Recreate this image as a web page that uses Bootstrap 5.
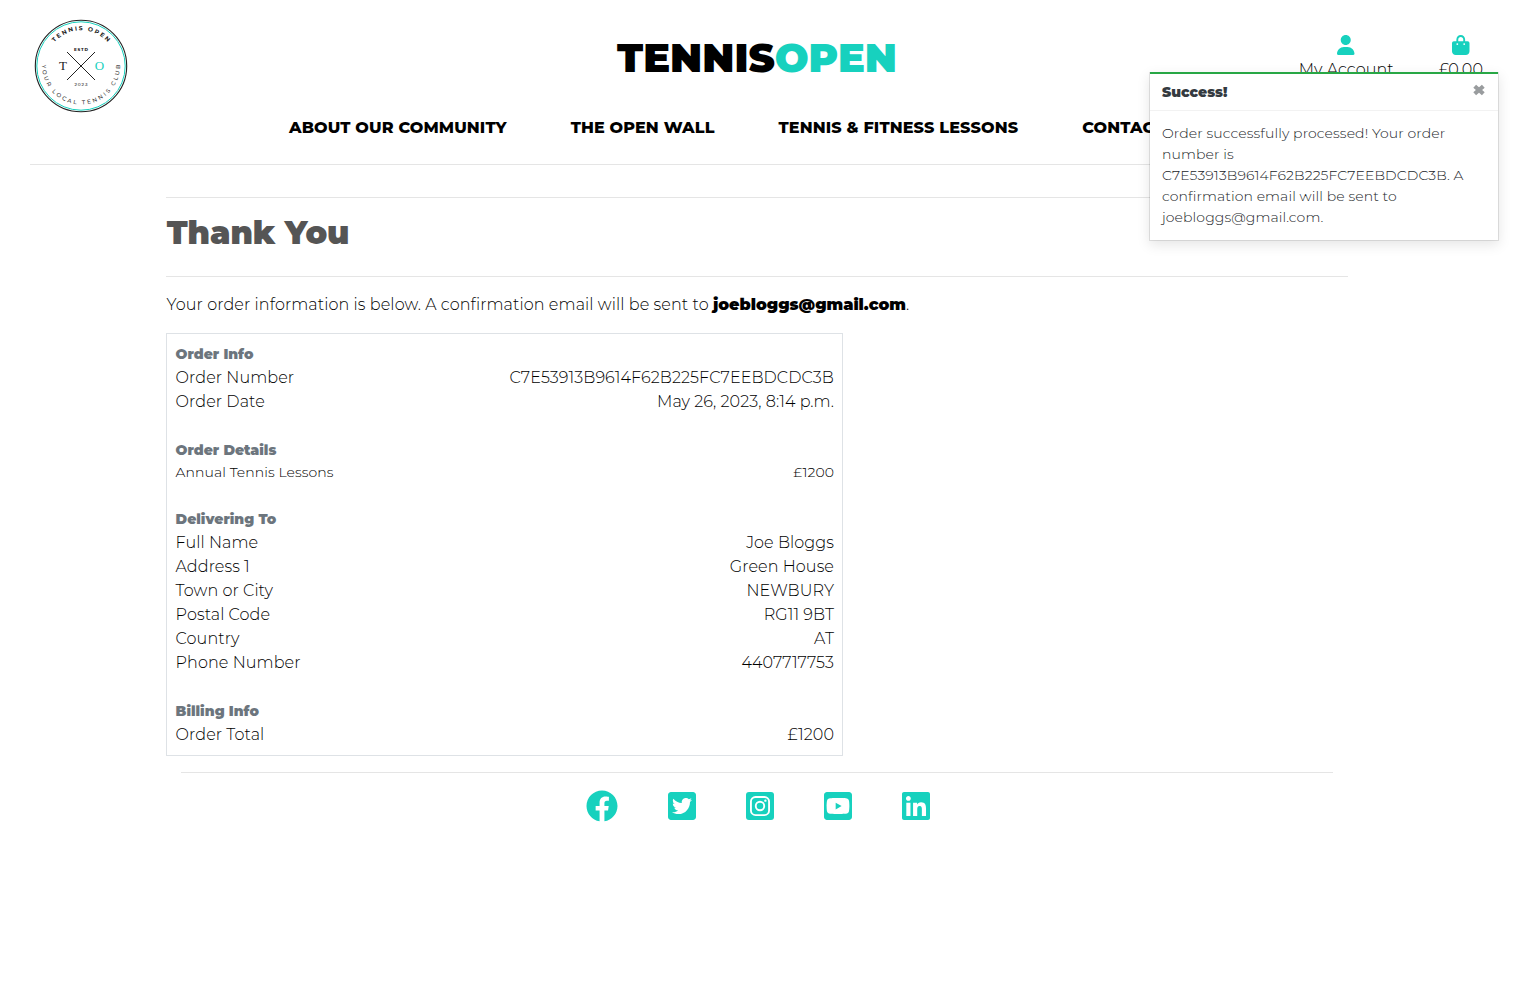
<!DOCTYPE html>
<html lang="en">
<head>
<meta charset="utf-8">
<meta name="viewport" content="width=device-width, initial-scale=1">
<title>Tennis Open</title>
<link href="https://cdn.jsdelivr.net/npm/bootstrap@5.3.0/dist/css/bootstrap.min.css" rel="stylesheet">
<style>
body{font-family:Montserrat,Inter,sans-serif;font-weight:300;color:#000;background:#fff;font-size:16px;line-height:24px;letter-spacing:.08px;overflow-x:hidden}
svg{display:block}
.teal{color:#17d1be}
.site-head{height:164px;padding:0 30px}
.head-top{height:112px}
.brand-logo{width:94px;height:94px;margin:19px 0 0 4px}
.site-title{font-size:40px;font-weight:900;line-height:48px;padding-top:34px;letter-spacing:0}
.side{flex:1 1 0}
.acct{padding-top:35px}
.acct a{color:#000;text-decoration:none;text-align:center;line-height:24px}
.acct svg{width:17.5px;height:20px;margin:0 auto 3px}
.acct .bag{margin-left:45px;margin-right:1px}
.site-nav{gap:64px;padding-left:259px;margin-top:4px}
.site-nav a{color:#000;text-decoration:none;font-weight:800;white-space:nowrap;letter-spacing:.12px}
.line{border-top:1px solid #e5e5e5}
.main-col{width:1182px;margin:32px auto 0}
h1{font-size:32px;font-weight:900;line-height:38.4px;color:#555;margin:16px 0 24px;padding-left:.7px;letter-spacing:-.05px}
.intro{margin:16px 0 16px;padding-left:.6px;letter-spacing:.1px}
.intro b{letter-spacing:0}
.intro b,.grp{font-weight:900}
.order-box{width:677px;border:1px solid #dee2e6;padding:8px 8px 8px 8.6px}
.grp{font-size:14px;color:#6c757d;letter-spacing:0}
.sect{margin-bottom:24px}
.sect:last-child{margin-bottom:0}
.s14{font-size:14px;line-height:21px}
.s14 span{position:relative;top:-.5px}
.foot-line{margin:16px 15px 0}
.social{gap:50px;padding:17px 0 0 2px}
.social svg{height:32px}
.toast-pane{position:absolute;top:72px;right:15px;width:350px;background:#fff;border:1px solid rgba(0,0,0,.1);border-top:0;background-clip:padding-box;box-shadow:0 4px 12px rgba(0,0,0,.1);font-size:14px;line-height:21px}
.toast-bar{height:2px;background:#28a745}
.toast-top{height:37px;padding:0 12.500px 0 12px;border-bottom:1px solid rgba(0,0,0,.05)}
.toast-top strong{font-weight:900;color:#343a40;letter-spacing:0}
.toast-text{padding:12px;color:#212529;letter-spacing:.1px}
</style>
</head>
<body>
<header class="site-head">
  <div class="head-top d-flex">
    <div class="side">
      <svg class="brand-logo" viewBox="-47 -47 94 94">
        <defs>
          <path id="arcTop" d="M-35.7 0A35.7 35.7 0 0 1 35.7 0"/>
          <path id="arcBottom" d="M-38.6 -6A39 39 0 1 0 38.6 -6"/>
        </defs>
        <circle r="45.7" fill="none" stroke="#222" stroke-width="1.1"/>
        <circle r="44.2" fill="none" stroke="#17d1be" stroke-width="1"/>
        <text font-size="6" font-weight="700" fill="#222"><textPath href="#arcTop" startOffset="50%" text-anchor="middle" textLength="60">TENNIS OPEN</textPath></text>
        <text font-size="5.700" font-weight="500" fill="#333"><textPath href="#arcBottom" startOffset="50%" text-anchor="middle" textLength="124">YOUR LOCAL TENNIS CLUB</textPath></text>
        <path d="M-14-14L14 14M14-14L-14 14" stroke="#222" stroke-width="1"/>
        <g text-anchor="middle" fill="#222">
          <text y="-14.9" font-size="4.2" font-weight="800" textLength="14">ESTD</text>
          <text y="20" font-size="4.4" font-weight="500" textLength="13">2023</text>
          <text x="-18" y="4" font-family="Liberation Serif,serif" font-size="13" font-weight="400">T</text>
          <text x="18.5" y="4" font-family="Liberation Serif,serif" font-size="13" font-weight="400" fill="#17d1be">O</text>
        </g>
      </svg>
    </div>
    <div class="site-title">TENNIS<span class="teal">OPEN</span></div>
    <div class="side acct d-flex justify-content-end">
      <a href="#"><svg class="teal" viewBox="0 0 448 512" fill="currentColor"><path d="M224 256c70.7 0 128-57.3 128-128S294.7 0 224 0 96 57.3 96 128s57.3 128 128 128zm-45.7 48C79.8 304 0 383.8 0 482.3C0 498.7 13.3 512 29.7 512H418.3c16.4 0 29.7-13.3 29.7-29.7C448 383.8 368.2 304 269.7 304H178.3z"/></svg>My Account</a>
      <a href="#" class="bag"><svg class="teal" viewBox="0 0 448 512" fill="currentColor"><path d="M160 112c0-35.3 28.7-64 64-64s64 28.7 64 64v48H160V112zm-48 48H48c-26.5 0-48 21.5-48 48V416c0 53 43 96 96 96H352c53 0 96-43 96-96V208c0-26.5-21.5-48-48-48H336V112C336 50.1 285.9 0 224 0S112 50.1 112 112v48zm24 48a24 24 0 1 1 0 48 24 24 0 1 1 0-48zm152 24a24 24 0 1 1 48 0 24 24 0 1 1-48 0z"/></svg>£0.00</a>
    </div>
  </div>
  <nav class="site-nav d-flex">
    <a href="#">ABOUT OUR COMMUNITY</a><a href="#">THE OPEN WALL</a><a href="#">TENNIS &amp; FITNESS LESSONS</a><a href="#">CONTACT US</a>
  </nav>
</header>
<div class="line" style="margin:0 30px"></div>

<main class="main-col">
  <div class="line"></div>
  <h1>Thank You</h1>
  <div class="line"></div>
  <p class="intro">Your order information is below. A confirmation email will be sent to <b>joebloggs@gmail.com</b>.</p>
  <div class="order-box">
    <section class="sect">
      <div class="grp">Order Info</div>
      <div class="d-flex justify-content-between"><span>Order Number</span><span>C7E53913B9614F62B225FC7EEBDCDC3B</span></div>
      <div class="d-flex justify-content-between"><span>Order Date</span><span>May 26, 2023, 8:14 p.m.</span></div>
    </section>
    <section class="sect">
      <div class="grp">Order Details</div>
      <div class="d-flex justify-content-between s14"><span>Annual Tennis Lessons</span><span>£1200</span></div>
    </section>
    <section class="sect">
      <div class="grp">Delivering To</div>
      <div class="d-flex justify-content-between"><span>Full Name</span><span>Joe Bloggs</span></div>
      <div class="d-flex justify-content-between"><span>Address 1</span><span>Green House</span></div>
      <div class="d-flex justify-content-between"><span>Town or City</span><span>NEWBURY</span></div>
      <div class="d-flex justify-content-between"><span>Postal Code</span><span>RG11 9BT</span></div>
      <div class="d-flex justify-content-between"><span>Country</span><span>AT</span></div>
      <div class="d-flex justify-content-between"><span>Phone Number</span><span>4407717753</span></div>
    </section>
    <section class="sect">
      <div class="grp">Billing Info</div>
      <div class="d-flex justify-content-between"><span>Order Total</span><span>£1200</span></div>
    </section>
  </div>
  <footer>
    <div class="line foot-line"></div>
    <div class="social teal d-flex justify-content-center">
      <svg viewBox="0 0 512 512" width="32" fill="currentColor"><path d="M504 256C504 119 393 8 256 8S8 119 8 256c0 123.78 90.69 226.38 209.25 245V327.69h-63V256h63v-54.64c0-62.15 37-96.48 93.67-96.48 27.14 0 55.52 4.84 55.52 4.84v61h-31.28c-30.8 0-40.41 19.12-40.41 38.73V256h68.78l-11 71.69h-57.78V501C413.31 482.38 504 379.78 504 256z"/></svg>
      <svg viewBox="0 0 448 512" width="28" fill="currentColor"><path d="M400 32H48C21.5 32 0 53.5 0 80v352c0 26.5 21.5 48 48 48h352c26.5 0 48-21.5 48-48V80c0-26.5-21.5-48-48-48zm-48.9 158.8c.2 2.8.2 5.7.2 8.5 0 86.7-66 186.6-186.6 186.6-37.2 0-71.7-10.8-100.7-29.4 5.3.6 10.4.8 15.8.8 30.7 0 58.9-10.4 81.4-28-28.8-.6-53-19.5-61.3-45.5 10.1 1.5 19.2 1.5 29.6-1.2-30-6.1-52.5-32.5-52.5-64.4v-.8c8.7 4.9 18.9 7.9 29.6 8.3a65.447 65.447 0 0 1-29.2-54.6c0-12.2 3.2-23.4 8.9-33.1 32.3 39.8 80.8 65.8 135.2 68.6-9.3-44.5 24-80.6 64-80.6 18.9 0 35.9 7.9 47.9 20.7 14.8-2.8 29-8.3 41.6-15.8-4.9 15.2-15.2 28-28.8 36.1 13.2-1.4 26-5.1 37.8-10.2-8.9 13.1-20.1 24.7-32.9 34z"/></svg>
      <svg viewBox="0 0 448 512" width="28"><rect y="32" width="448" height="448" rx="48" fill="currentColor"/><g fill="none" stroke="#fff" stroke-width="30"><rect x="79" y="111" width="290" height="290" rx="74"/><circle cx="224" cy="256" r="68"/></g><circle cx="310" cy="170" r="19" fill="#fff"/></svg>
      <svg viewBox="0 0 448 512" width="28" fill="currentColor"><path d="M186.8 202.1l95.2 54.1-95.2 54.1V202.1zM448 80v352c0 26.5-21.5 48-48 48H48c-26.5 0-48-21.5-48-48V80c0-26.5 21.5-48 48-48h352c26.5 0 48 21.5 48 48zm-42 176.3s0-59.6-7.6-88.2c-4.2-15.8-16.5-28.2-32.2-32.4C337.9 128 224 128 224 128s-113.9 0-142.2 7.7c-15.7 4.2-28 16.6-32.2 32.4-7.6 28.5-7.6 88.2-7.6 88.2s0 59.6 7.6 88.2c4.2 15.8 16.5 27.7 32.2 31.9C110.1 384 224 384 224 384s113.9 0 142.2-7.7c15.7-4.2 28-16.1 32.2-31.9 7.6-28.5 7.6-88.1 7.6-88.1z"/></svg>
      <svg viewBox="0 0 448 512" width="28" fill="currentColor"><path d="M416 32H31.9C14.3 32 0 46.5 0 64.3v383.4C0 465.5 14.3 480 31.9 480H416c17.6 0 32-14.5 32-32.3V64.3c0-17.8-14.4-32.3-32-32.3zM135.4 416H69V202.2h66.5V416zm-33.2-243c-21.3 0-38.5-17.3-38.5-38.5S80.9 96 102.2 96c21.2 0 38.5 17.3 38.5 38.5 0 21.3-17.2 38.5-38.5 38.5zm282.1 243h-66.4V312c0-24.8-.5-56.7-34.5-56.7-34.6 0-39.9 27-39.9 54.9V416h-66.4V202.2h63.7v29.2h.9c8.9-16.8 30.6-34.5 62.9-34.5 67.2 0 79.7 44.3 79.7 101.9V416z"/></svg>
    </div>
  </footer>
</main>

<div class="toast-pane" role="alert">
  <div class="toast-bar"></div>
  <div class="toast-top d-flex justify-content-between align-items-center">
    <strong>Success!</strong>
    <svg width="14" height="14" viewBox="-7 -7 14 14" style="margin-top:-5px"><path d="M-4.3-3.8L4.3 3.8M4.3-3.8L-4.3 3.8" stroke="#999c9e" stroke-width="4.2"/></svg>
  </div>
  <div class="toast-text">Order successfully processed! Your order number is C7E53913B9614F62B225FC7EEBDCDC3B. A confirmation email will be sent to joebloggs@gmail.com.</div>
</div>
<script src="https://cdn.jsdelivr.net/npm/bootstrap@5.3.0/dist/js/bootstrap.bundle.min.js"></script>
</body>
</html>
